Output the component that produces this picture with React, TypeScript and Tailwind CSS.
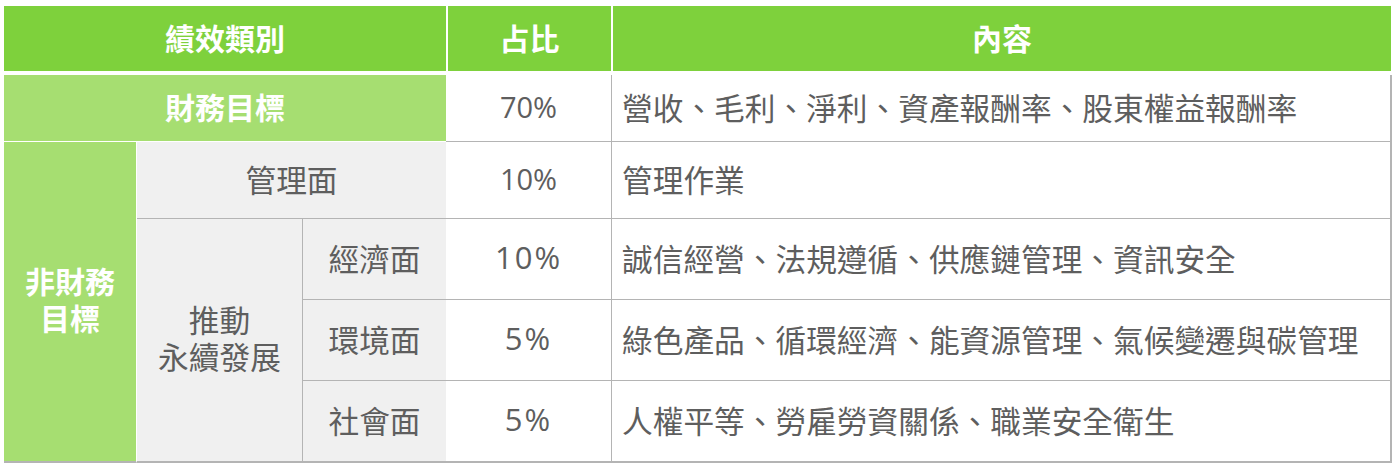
import React from "react";

const cjk = { fontFamily: '"Noto Sans CJK TC", "Noto Sans", sans-serif' };
const num = { fontFamily: '"Open Sans", "Noto Sans", sans-serif' };

export default function App() {
  const line = "border-[#b4b4b4]";
  return (
    <div className="w-[1394px] h-[467px] bg-white pt-[6px] pl-[4px]" style={cjk}>
      {/* Header */}
      <div className="flex gap-[2px] h-[65px] text-white font-bold text-[30px]">
        <div className="w-[442px] bg-[#7ed13c] flex items-center justify-center pb-[2px]">績效類別</div>
        <div className="w-[163px] bg-[#7ed13c] flex items-center justify-center pb-[2px]">占比</div>
        <div className="w-[778px] bg-[#7ed13c] flex items-center justify-center pb-[2px]">內容</div>
      </div>

      {/* Body */}
      <div className="mt-[4px] grid grid-cols-[133px_166px_143px_166px_780px] grid-rows-[67px_77px_81px_81px_82px] text-[#5e5e5e] text-[30.7px] leading-[37px]">
        {/* Row 1 */}
        <div className="col-start-1 col-span-3 row-start-1 bg-[#a6de71] border-b border-white flex items-center justify-center text-white font-bold text-[30px] pb-[4px]">
          財務目標
        </div>
        <div className={`col-start-4 row-start-1 border-b border-r ${line} flex items-center justify-center text-[29px] pb-[3px]`} style={num}>
          70%
        </div>
        <div className={`col-start-5 row-start-1 border-b border-r-2 ${line} flex items-center pl-[10px] pb-[4px]`}>
          營收、毛利、淨利、資產報酬率、股東權益報酬率
        </div>

        {/* 非財務目標 */}
        <div className="col-start-1 row-start-2 row-span-4 bg-[#a6de71] border-r border-r-white border-b-2 border-b-[#b4b4b4] flex flex-col items-center justify-center text-white font-bold text-[30px] leading-[37px] pb-[6px]">
          <span className="block h-[37px]">非財務</span>
          <span className="block h-[37px]">目標</span>
        </div>

        {/* Row 2 管理面 */}
        <div className={`col-start-2 col-span-2 row-start-2 bg-[#f0f0f0] border-b ${line} flex items-center justify-center pb-[4px]`}>
          管理面
        </div>
        <div className={`col-start-4 row-start-2 border-b border-r ${line} flex items-center justify-center text-[29px] pb-[3px]`} style={num}>
          10%
        </div>
        <div className={`col-start-5 row-start-2 border-b border-r-2 ${line} flex items-center pl-[10px] pb-[4px]`}>
          管理作業
        </div>

        {/* 推動永續發展 */}
        <div className={`col-start-2 row-start-3 row-span-3 bg-[#f0f0f0] border-r border-b-2 ${line} flex flex-col items-center justify-center pb-[6px]`}>
          <span className="block h-[37px]">推動</span>
          <span className="block h-[37px]">永續發展</span>
        </div>

        {/* Row 3 經濟面 */}
        <div className={`col-start-3 row-start-3 bg-[#f0f0f0] border-b ${line} flex items-center justify-center pb-[4px]`}>
          經濟面
        </div>
        <div className={`col-start-4 row-start-3 border-b border-r ${line} flex items-center justify-center text-[31px] tracking-[2px] pb-[3px]`} style={num}>
          10%
        </div>
        <div className={`col-start-5 row-start-3 border-b border-r-2 ${line} flex items-center pl-[10px] pb-[4px]`}>
          誠信經營、法規遵循、供應鏈管理、資訊安全
        </div>

        {/* Row 4 環境面 */}
        <div className={`col-start-3 row-start-4 bg-[#f0f0f0] border-b ${line} flex items-center justify-center pb-[4px]`}>
          環境面
        </div>
        <div className={`col-start-4 row-start-4 border-b border-r ${line} flex items-center justify-center text-[31px] tracking-[2px] pb-[3px]`} style={num}>
          5%
        </div>
        <div className={`col-start-5 row-start-4 border-b border-r-2 ${line} flex items-center pl-[10px] pb-[4px]`}>
          綠色產品、循環經濟、能資源管理、氣候變遷與碳管理
        </div>

        {/* Row 5 社會面 */}
        <div className={`col-start-3 row-start-5 bg-[#f0f0f0] border-b-2 ${line} flex items-center justify-center pb-[4px]`}>
          社會面
        </div>
        <div className={`col-start-4 row-start-5 border-b-2 border-r ${line} flex items-center justify-center text-[31px] tracking-[2px] pb-[3px]`} style={num}>
          5%
        </div>
        <div className={`col-start-5 row-start-5 border-b-2 border-r-2 ${line} flex items-center pl-[10px] pb-[4px]`}>
          人權平等、勞雇勞資關係、職業安全衛生
        </div>
      </div>
    </div>
  );
}
